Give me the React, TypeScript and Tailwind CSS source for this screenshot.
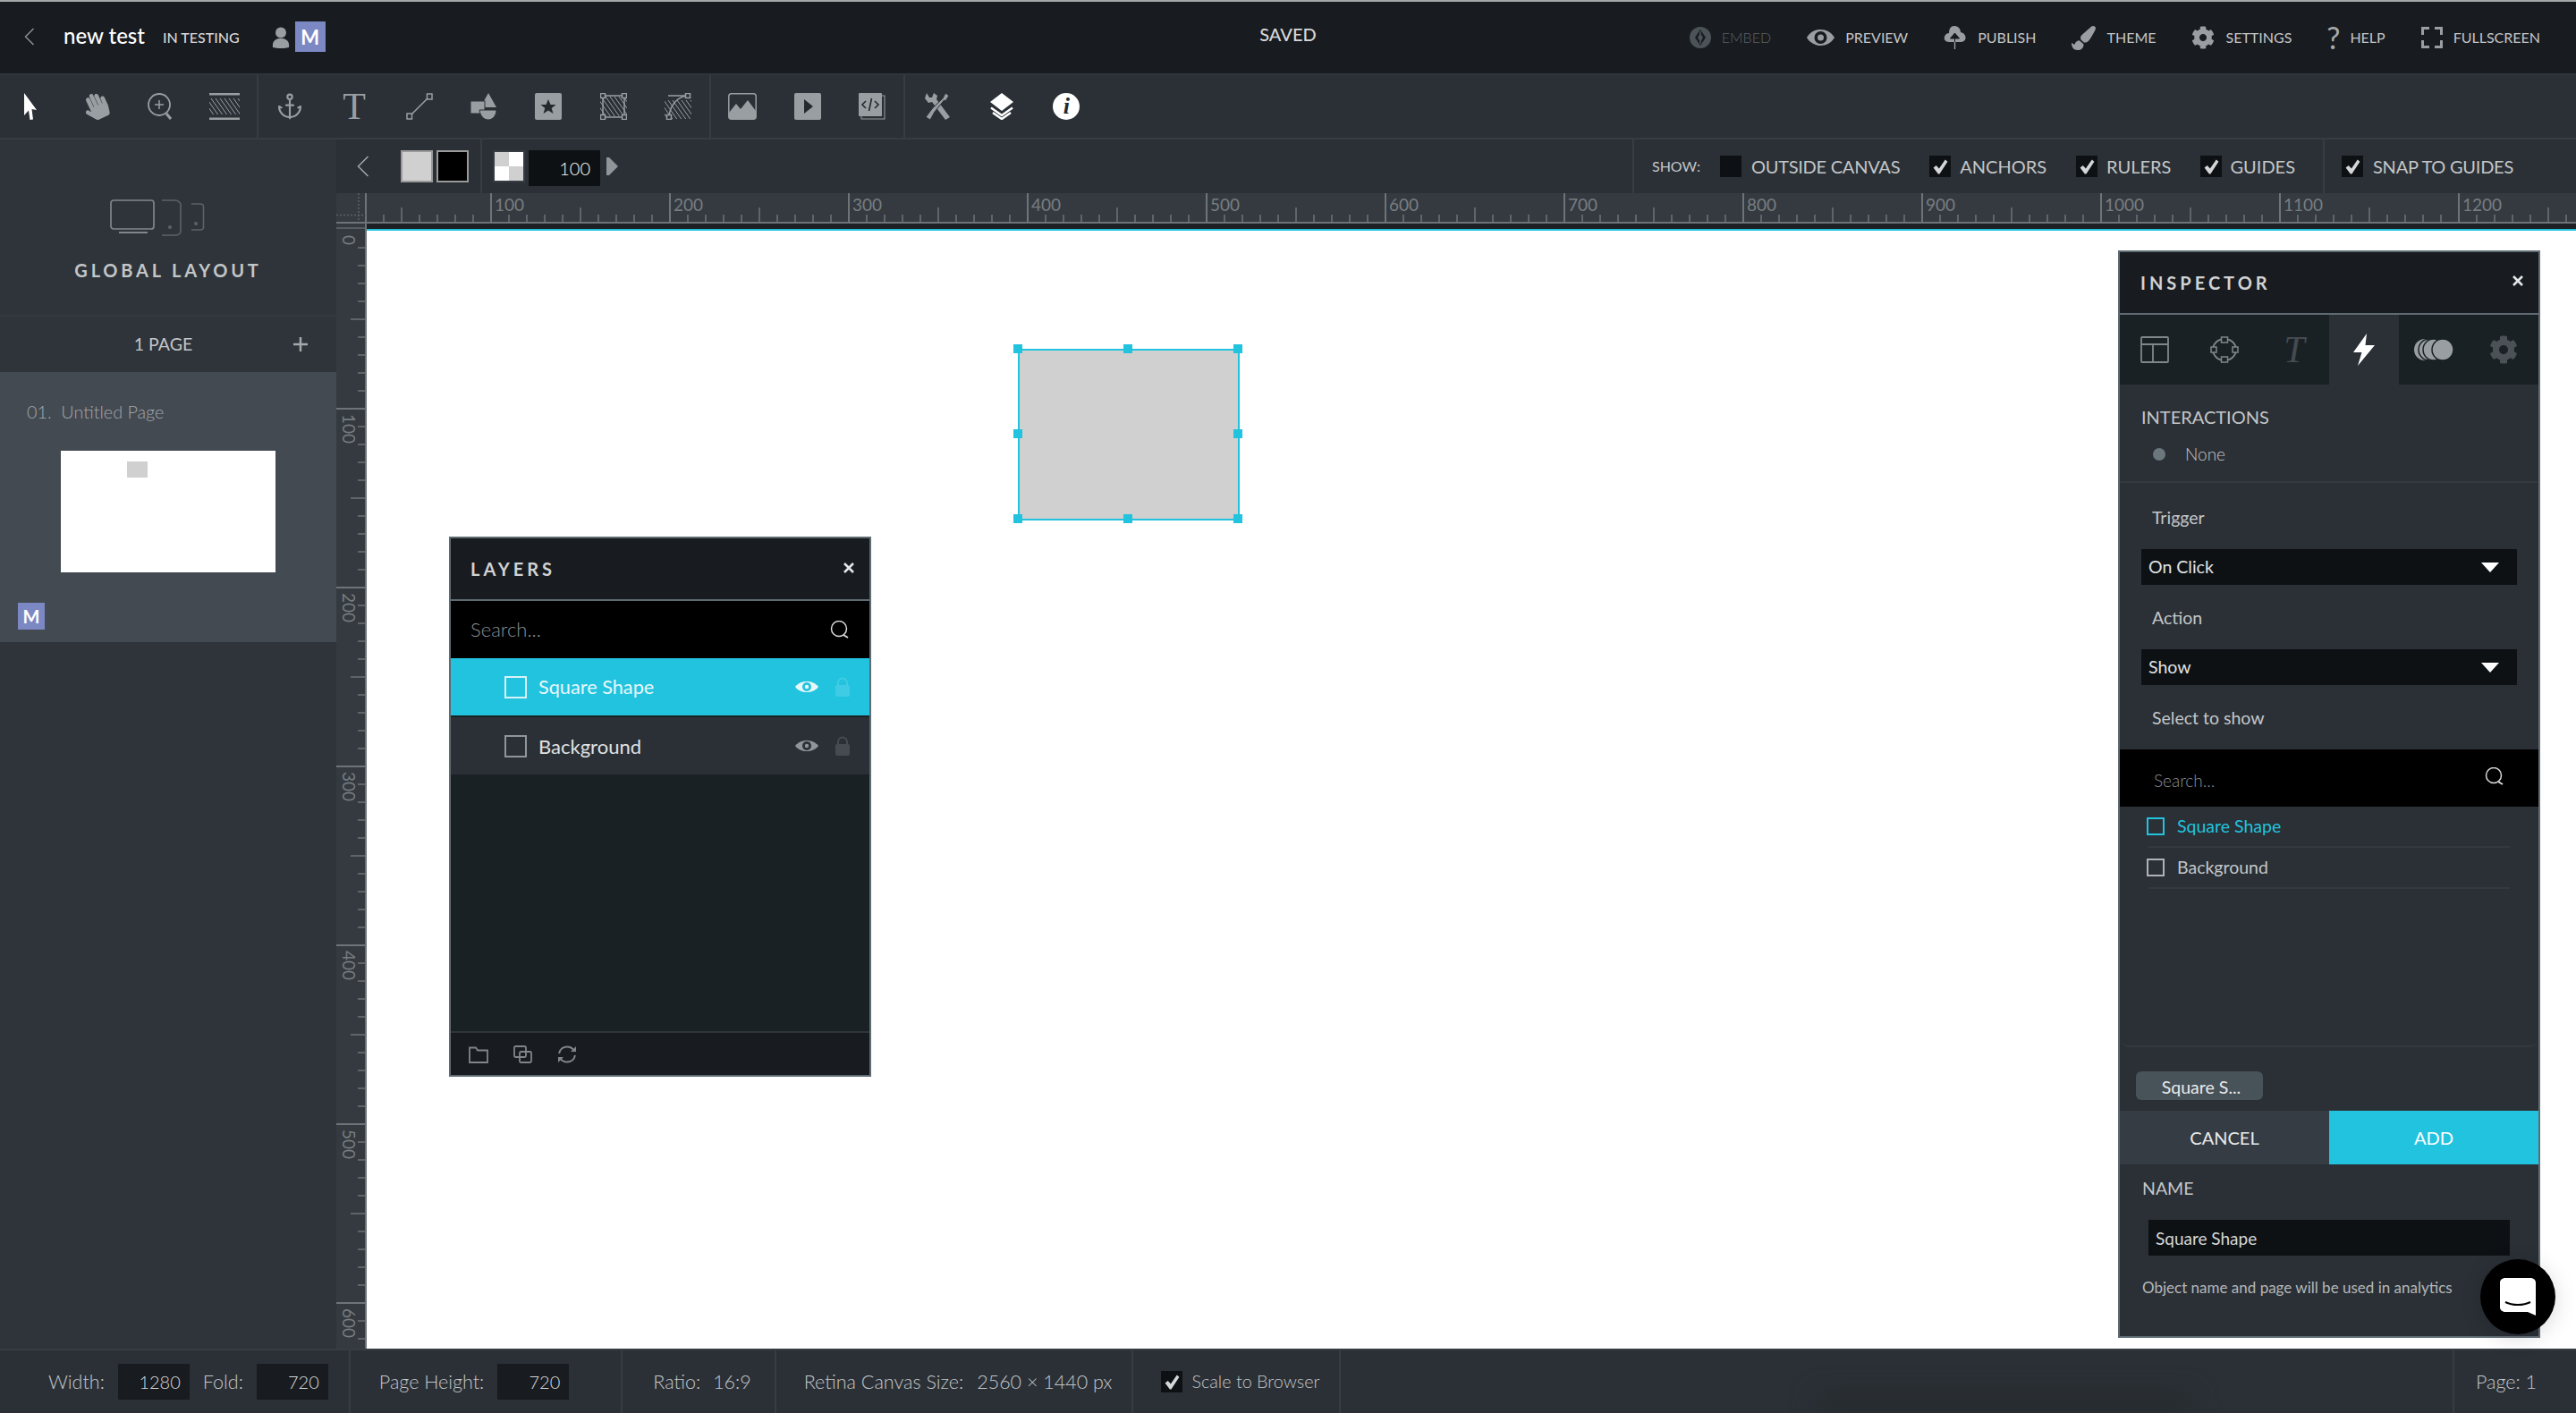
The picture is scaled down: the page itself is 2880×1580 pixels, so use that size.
import React from "react";
import { FaCog, FaHandPaper, FaPaintBrush } from "react-icons/fa";
import { Anchor } from "lucide-react";

const gray = "#999ea2";

const Svg = ({ w, h, children }: { w: number; h: number; children: React.ReactNode }) => (
  <svg width={w} height={h} viewBox={`0 0 ${w} ${h}`} className="shrink-0 block">
    {children}
  </svg>
);

const Hatch = ({ x, y, w, h, color = gray }: { x: number; y: number; w: number; h: number; color?: string }) => {
  const lines = [];
  for (let i = -h; i < w; i += 5) {
    lines.push(<line key={i} x1={x + i} y1={y} x2={x + i + h * 0.7} y2={y + h} stroke={color} strokeWidth="1" />);
  }
  return <g>{lines}</g>;
};

const Handle = ({ x, y }: { x: number; y: number }) => (
  <rect x={x - 2.5} y={y - 2.5} width="5" height="5" fill="#2a3036" stroke={gray} strokeWidth="1.5" />
);

const Close = ({ className }: { className?: string }) => (
  <svg width="14" height="14" viewBox="0 0 14 14" className={className}>
    <path d="M2 2L12 12M12 2L2 12" stroke="#e4e6e7" strokeWidth="2.6" />
  </svg>
);

const SearchGlass = ({ color = "#d8dadb" }: { color?: string }) => (
  <Svg w={22} h={20}>
    <circle cx="10" cy="9" r="8.5" fill="none" stroke={color} strokeWidth="1.5" />
    <path d="M15 16L20 19" stroke={color} strokeWidth="2" />
  </Svg>
);

const Eye = ({ color, pupil }: { color: string; pupil: string }) => (
  <Svg w={26} h={16}>
    <path d="M0 8C6 0 20 0 26 8C20 16 6 16 0 8Z" fill={color} />
    <circle cx="13" cy="8" r="5" fill={pupil} />
    <circle cx="13" cy="8" r="2.2" fill={color} />
  </Svg>
);

const Lock = ({ color }: { color: string }) => (
  <Svg w={16} h={22}>
    <path d="M3 10V6.5a5 5 0 0 1 10 0V10" fill="none" stroke={color} strokeWidth="2" />
    <rect x="0" y="9" width="16" height="13" rx="2" fill={color} />
  </Svg>
);

const Gear = ({ size, color }: { size: number; color: string }) => <FaCog size={size} color={color} className="shrink-0" />;

const Check = () => (
  <div className="shrink-0 bg-[#0d1114] flex items-center justify-center w-[24px] h-[24px]">
    <svg width="19" height="19" viewBox="0 0 18 18">
      <path d="M1.5 10L4.5 7.5L7.5 11L14 1.5L16.5 3.5L8 16.5H6.5Z" fill="#d4d6d7" />
    </svg>
  </div>
);

const Sep = () => <div className="w-[2px] -mx-[1px] self-stretch bg-[#363c42] shrink-0" />;

const ToolCell = ({ children }: { children: React.ReactNode }) => (
  <div className="w-[72.4px] h-full flex items-center justify-center shrink-0">{children}</div>
);

const NavItem = ({ icon, label, dim }: { icon: React.ReactNode; label: string; dim?: boolean }) => (
  <div className="flex items-center gap-[12px]">
    {icon}
    <span className={`text-[16px] ${dim ? "text-[#5a6167] font-light" : "text-[#c4c6c8]"}`}>{label}</span>
  </div>
);

const TopBar = () => (
  <div className="h-[84px] shrink-0 flex items-center bg-[#181b1f] border-t-2 border-b-2 border-t-[#a5a7a9] border-b-[#2f353b]">
    <div className="flex-1 flex items-center">
      <svg width="12" height="20" viewBox="0 0 12 20" className="ml-[27px] -mt-[2px]">
        <path d="M10.5 1L1.5 10L10.5 19" fill="none" stroke="#8f9599" strokeWidth="1.4" />
      </svg>
      <span className="ml-[32px] text-[24px] font-medium text-white leading-none -mt-[4px]">new test</span>
      <span className="ml-[20px] text-[16px] text-[#d6d8d9] leading-none font-medium">IN TESTING</span>
      <div className="ml-[36px]">
        <Svg w={20} h={24}>
          <circle cx="10" cy="6.5" r="6" fill={gray} />
          <path d="M1 23C0 15 5 13 10 13S20 15 19 23C14 24.5 6 24.5 1 23Z" fill={gray} />
        </Svg>
      </div>
      <div className="ml-[6px] w-[34px] h-[34px] -mt-[2px] bg-[#7c88c4] flex items-center justify-center text-white font-bold text-[22px]">
        M
      </div>
    </div>
    <div className="text-[20px] text-[#d6d8d9] font-medium -mt-[8px]">SAVED</div>
    <div className="flex-1 flex justify-end">
      <div className="flex items-center gap-[40px] pr-[40px]">
        <NavItem
          dim
          label="EMBED"
          icon={
            <Svg w={24} h={24}>
              <circle cx="12" cy="12" r="12" fill="#4b5359" />
              <path d="M12 3L18 12L12 21L6 12Z" fill="#181b1f" />
              <path d="M12 7L15 12L12 17L9 12Z" fill="#4b5359" />
              <path d="M12 5V19" stroke="#4b5359" strokeWidth="1.5" />
            </Svg>
          }
        />
        <NavItem label="PREVIEW" icon={<Svg w={31} h={20}><path d="M0 10C7 -2 24 -2 31 10C24 22 7 22 0 10Z" fill={gray} /><circle cx="15.5" cy="10" r="7" fill="#181b1f" /><circle cx="15.5" cy="10" r="3.5" fill={gray} /></Svg>} />
        <NavItem
          label="PUBLISH"
          icon={
            <Svg w={26} h={26}>
              <path d="M12 0C17 0 19 4 19 7C23 8 25 11 24.5 14C24 17 21 18 19 18H7C4 18 1 17 .8 14C.5 11 3 8 6 8C6 3 8 0 12 0Z" fill={gray} />
              <path d="M12.5 26V9M7.5 14L12.5 8L17.5 14Z" stroke="#181b1f" strokeWidth="1" fill="#181b1f" />
              <path d="M12.5 18V26" stroke={gray} strokeWidth="1.4" />
            </Svg>
          }
        />
        <NavItem label="THEME" icon={<FaPaintBrush size={27} color={gray} className="shrink-0" />} />
        <NavItem label="SETTINGS" icon={<Gear size={26} color={gray} />} />
        <NavItem label="HELP" icon={<span className="w-[13px] text-[34px] leading-none text-[#a7abae] flex justify-center">?</span>} />
        <NavItem
          label="FULLSCREEN"
          icon={
            <Svg w={24} h={24}>
              <path d="M1.5 9V1.5H9M15 1.5H22.5V9M22.5 15V22.5H15M9 22.5H1.5V15" fill="none" stroke={gray} strokeWidth="3" />
            </Svg>
          }
        />
      </div>
    </div>
  </div>
);

const Toolbar = () => (
  <div className="h-[72px] shrink-0 flex items-center bg-[#2a3036] border-b-2 border-[#363c42] -ml-[2px]">
    <ToolCell>
      <Svg w={16} h={30}>
        <path d="M1 0L15 19L9.500 18L11 29.500L7.500 30L6 19.500L1 25Z" fill="#fff" />
      </Svg>
    </ToolCell>
    <ToolCell>
      <FaHandPaper size={30} color={gray} className="-rotate-[25deg]" />
    </ToolCell>
    <ToolCell>
      <Svg w={28} h={30}>
        <circle cx="13" cy="13" r="12" fill="none" stroke={gray} strokeWidth="1.8" />
        <path d="M13 8V18M8 13H18" stroke={gray} strokeWidth="1.5" />
        <path d="M21 23L26 29" stroke={gray} strokeWidth="3" />
      </Svg>
    </ToolCell>
    <ToolCell>
      <Svg w={34} h={30}>
        <rect x="0" y="0" width="34" height="2.500" fill={gray} />
        <rect x="0" y="27.500" width="34" height="2.500" fill={gray} />
        <Hatch x={0} y={6} w={34} h={18} />
      </Svg>
    </ToolCell>
    <Sep />
    <ToolCell>
      <Anchor size={32} color={gray} strokeWidth={1.6} />
    </ToolCell>
    <ToolCell>
      <span className="text-[42px] leading-none text-[#999ea2] font-['Liberation_Serif',serif]">T</span>
    </ToolCell>
    <ToolCell>
      <Svg w={30} h={30}>
        <path d="M4 26L26 4" stroke={gray} strokeWidth="1.6" />
        <rect x="1" y="23" width="5.500" height="6" fill="#2a3036" stroke={gray} strokeWidth="1.5" />
        <rect x="23.500" y="1" width="5.500" height="6" fill="#2a3036" stroke={gray} strokeWidth="1.5" />
      </Svg>
    </ToolCell>
    <ToolCell>
      <Svg w={30} h={30}>
        <path d="M20 0L29 16H11Z" fill={gray} />
        <rect x="0" y="9" width="16" height="14" fill={gray} stroke="#2a3036" strokeWidth="1" />
        <path d="M10 19H29C29 26 24 30 20 30C15 30 11 26 10 19Z" fill={gray} stroke="#2a3036" strokeWidth="1" />
      </Svg>
    </ToolCell>
    <ToolCell>
      <Svg w={30} h={30}>
        <rect width="30" height="30" rx="2" fill={gray} />
        <path d="M15 7L17.500 13H23.500L18.700 17L20.500 23L15 19.500L9.500 23L11.300 17L6.500 13H12.500Z" fill="#24292e" />
      </Svg>
    </ToolCell>
    <ToolCell>
      <Svg w={30} h={30}>
        <rect x="3" y="3" width="24" height="24" fill="none" stroke={gray} strokeWidth="1.500" />
        <Hatch x={3} y={4} w={24} h={22} />
        <Handle x={3} y={3} />
        <Handle x={27} y={3} />
        <Handle x={3} y={27} />
        <Handle x={27} y={27} />
      </Svg>
    </ToolCell>
    <ToolCell>
      <Svg w={30} h={30}>
        <path d="M4 3H27" stroke={gray} strokeWidth="1.500" />
        <Hatch x={10} y={8} w={20} h={21} />
        <path d="M5 29C5 15 13 5 25 3" fill="none" stroke={gray} strokeWidth="1.500" />
        <Handle x={26} y={3} />
        <Handle x={5} y={27} />
      </Svg>
    </ToolCell>
    <Sep />
    <ToolCell>
      <Svg w={32} h={30}>
        <rect x=".8" y=".8" width="30.400" height="28.400" rx="3" fill="none" stroke={gray} strokeWidth="1.500" />
        <path d="M1 29V22L9 12L14 18L22 8L31 20V29Z" fill={gray} />
      </Svg>
    </ToolCell>
    <ToolCell>
      <Svg w={30} h={30}>
        <rect width="30" height="30" rx="2" fill={gray} />
        <path d="M11 7L21 15L11 23Z" fill="#24292e" />
      </Svg>
    </ToolCell>
    <ToolCell>
      <Svg w={30} h={30}>
        <rect x="3" y="3" width="26" height="26" fill="#2a3036" stroke={gray} strokeWidth="1" />
        <rect x="0" y="0" width="26" height="26" rx="1" fill={gray} />
        <path d="M8 9L4 13L8 17M18 9L22 13L18 17" fill="none" stroke="#24292e" strokeWidth="1.600" />
        <path d="M14.500 6L11.500 20" stroke="#24292e" strokeWidth="1.600" />
      </Svg>
    </ToolCell>
    <Sep />
    <ToolCell>
      <Svg w={30} h={30}>
        <path d="M3 0L1 6L5 11L9 10L24 30L29 27L14 7L15 3L11 0L9 5L6 5Z" fill={gray} />
        <path d="M24 0L28 3L24 9L22.500 8L12 21L7 30L2 27L9.500 17L21 6Z" fill={gray} stroke="#2a3036" strokeWidth="1" />
      </Svg>
    </ToolCell>
    <ToolCell>
      <Svg w={30} h={30}>
        <path d="M15 0L28 10L15 20L2 10Z" fill="#fff" />
        <path d="M3 16.500L15 25L27 16.500" fill="none" stroke="#fff" strokeWidth="2.500" />
        <path d="M5 22L15 29L25 22" fill="none" stroke="#fff" strokeWidth="2.500" />
      </Svg>
    </ToolCell>
    <ToolCell>
      <div className="w-[30px] h-[30px] rounded-full bg-white flex items-center justify-center text-[#24292e] italic font-bold text-[26px] leading-none font-['Liberation_Serif',serif]">
        i
      </div>
    </ToolCell>
  </div>
);

const Sidebar = () => (
  <div className="w-[376px] shrink-0 flex flex-col bg-[#2e343a]">
    <div className="h-[198px] shrink-0 flex flex-col items-center border-b-2 border-[#33393f]">
      <div className="mt-[67px] ml-[-24px]">
        <Svg w={106} h={42}>
          <rect x="1" y="1" width="48" height="32" rx="3" fill="none" stroke="#81868a" strokeWidth="1.700" />
          <path d="M10 37H42" stroke="#81868a" strokeWidth="2" />
          <path d="M58 1H73C75 1 79 3 79 6V36C79 39 75 40 73 40H58" fill="none" stroke="#5c6267" strokeWidth="1.600" />
          <circle cx="67" cy="31" r="2" fill="#5c6267" />
          <path d="M91 5H101C103 5 104.500 6 104.500 8V31C104.500 33 103 34 101 34H91" fill="none" stroke="#5c6267" strokeWidth="1.600" />
          <circle cx="96" cy="27" r="2" fill="#5c6267" />
        </Svg>
      </div>
      <div className="mt-[27px] text-[20px] font-bold tracking-[0.19em] text-[#c3c6c8] leading-none">GLOBAL LAYOUT</div>
    </div>
    <div className="h-[62px] shrink-0 relative flex items-center justify-center">
      <span className="text-[19.5px] text-[#c3c6c8] -ml-[11px]">1 PAGE</span>
      <svg width="16" height="16" viewBox="0 0 16 16" className="absolute left-[328px] top-[23px]">
        <path d="M8 0V16M0 8H16" stroke="#a4a8ab" strokeWidth="2.500" />
      </svg>
    </div>
    <div className="h-[302px] shrink-0 bg-[#434a52] flex flex-col">
      <div className="mt-[32px] pl-[30px] text-[19.8px] font-light text-[#a2a6aa] leading-[24px] whitespace-pre">01.&nbsp; Untitled Page</div>
      <div className="mt-[32px] ml-[68px] w-[240px] h-[136px] bg-white pt-[12px] pl-[74px]">
        <div className="w-[23px] h-[18px] bg-[#d0d0d0]" />
      </div>
      <div className="mt-[34px] ml-[20px] w-[30px] h-[30px] bg-[#7c88c4] flex items-center justify-center text-white font-bold text-[20px]">
        M
      </div>
    </div>
  </div>
);

const OptionRow = () => (
  <div className="h-[60px] shrink-0 flex items-center bg-[#2a3036]">
    <svg width="14" height="24" viewBox="0 0 14 24" className="ml-[23px] shrink-0">
      <path d="M12.500 1L1.500 12L12.500 23" fill="none" stroke="#a4a8ab" strokeWidth="1.500" />
    </svg>
    <div className="ml-[35px] w-[36px] h-[36px] border-2 border-[#9a9a9a] bg-[#d0d0d0] shrink-0" />
    <div className="ml-[4px] w-[36px] h-[36px] border-2 border-[#9a9a9a] bg-black shrink-0" />
    <div className="ml-[13px] w-[2px] self-stretch bg-[#363c42] shrink-0" />
    <div className="ml-[12px] w-[36px] h-[36px] border-2 border-[#363c42] grid grid-cols-2 shrink-0">
      <div className="bg-[#d0d0d0]" />
      <div className="bg-white" />
      <div className="bg-white" />
      <div className="bg-[#d0d0d0]" />
    </div>
    <div className="ml-[4px] mt-[4px] w-[80px] h-[40px] bg-[#0d1114] flex items-center justify-end pr-[11px] text-[20px] font-light text-white shrink-0">
      100
    </div>
    <svg width="13" height="20" viewBox="0 0 13 20" className="ml-[7px] shrink-0">
      <path d="M0 0H3L13 10L3 20H0Z" fill="#8f9599" />
    </svg>
    <div className="flex-1" />
    <div className="w-[2px] self-stretch bg-[#363c42] shrink-0" />
    <span className="ml-[20px] text-[16px] text-[#c4c6c8]">SHOW:</span>
    <div className="ml-[22px] w-[24px] h-[24px] bg-[#0d1114] shrink-0" />
    <span className="ml-[11px] text-[20px] tracking-[-0.25px] text-[#c4c6c8]">OUTSIDE CANVAS</span>
    <div className="ml-[33px]"><Check /></div>
    <span className="ml-[10px] text-[20px] text-[#c4c6c8]">ANCHORS</span>
    <div className="ml-[33px]"><Check /></div>
    <span className="ml-[10px] text-[20px] text-[#c4c6c8]">RULERS</span>
    <div className="ml-[33px]"><Check /></div>
    <span className="ml-[9px] text-[20px] text-[#c4c6c8]">GUIDES</span>
    <div className="ml-[31px] w-[2px] self-stretch bg-[#363c42] shrink-0" />
    <div className="ml-[19px]"><Check /></div>
    <span className="ml-[11px] text-[20px] tracking-[-0.25px] text-[#c4c6c8]">SNAP TO GUIDES</span>
    <div className="w-[70px] shrink-0" />
  </div>
);

const tick = "#6e7377";
const rulerText = "#787d81";

const HRuler = () => {
  const items = [];
  for (let x = 429; x < 2880; x += 20) {
    const n = (x - 349) / 20;
    const rx = x - 376;
    if (n % 10 === 0) {
      items.push(<line key={x} x1={rx} y1="0" x2={rx} y2="32" stroke={tick} strokeWidth="2" />);
      items.push(
        <text key={`t${x}`} x={rx + 4} y="20" fill={rulerText} fontSize="19" fontFamily="Lato, sans-serif">
          {(n / 10) * 100}
        </text>
      );
    } else {
      items.push(<line key={x} x1={rx} y1={n % 5 === 0 ? 16 : 24} x2={rx} y2="32" stroke={tick} strokeWidth="1.500" />);
    }
  }
  return (
    <svg width="2504" height="40" viewBox="0 0 2504 40" className="block shrink-0">
      <rect width="2504" height="40" fill="#343a40" />
      <rect x="34" y="34" width="2470" height="6" fill="#1d2125" />
      <rect y="32" width="2504" height="2" fill={tick} />
      <rect x="32" width="2" height="40" fill={tick} />
      <rect y="38" width="32" height="2" fill="#565c61" />
      <path d="M25 0V32M0 24.500H33" stroke="#5c6267" strokeWidth="1.500" strokeDasharray="2 2" fill="none" />
      {items}
    </svg>
  );
};

const VRuler = () => {
  const items = [];
  for (let y = 277; y < 1508; y += 20) {
    const n = (y - 257) / 20;
    const ry = y - 256;
    if (n % 10 === 0) {
      items.push(<line key={y} x1="0" y1={ry} x2="32" y2={ry} stroke={tick} strokeWidth="2" />);
    } else {
      items.push(<line key={y} x1={n % 5 === 0 ? 16 : 24} y1={ry} x2="32" y2={ry} stroke={tick} strokeWidth="1.500" />);
    }
  }
  for (let i = 0; i <= 6; i++) {
    const ry = 1 + i * 200 + 6;
    items.push(
      <text key={`l${i}`} transform={`translate(7 ${ry}) rotate(90)`} fill={rulerText} fontSize="19" fontFamily="Lato, sans-serif">
        {i * 100}
      </text>
    );
  }
  return (
    <svg width="34" height="1252" viewBox="0 0 34 1252" className="block shrink-0">
      <rect width="34" height="1252" fill="#343a40" />
      <rect x="32" width="2" height="1252" fill={tick} />
      {items}
    </svg>
  );
};

const Bolt = ({ color }: { color: string }) => (
  <Svg w={24} h={36}>
    <path d="M15 0L0 21H9.500L5 36L24 13H13.500Z" fill={color} />
  </Svg>
);

const Box = ({ size, color }: { size: number; color: string }) => (
  <div className="shrink-0 border-2" style={{ width: size, height: size, borderColor: color }} />
);

const LayersPanel = () => (
  <div className="absolute left-[92px] top-[342px] w-[472px] h-[604px] border-2 border-[#5f6b73] bg-[#1a2125] flex flex-col">
    <div className="h-[70px] shrink-0 bg-[#181b1f] border-b-2 border-[#5f6b73] flex items-center justify-between pl-[22px] pr-[16px]">
      <span className="text-[20px] font-bold tracking-[0.2em] text-[#d0d2d4]">LAYERS</span>
      <Close className="-mt-[3px]" />
    </div>
    <div className="h-[64px] shrink-0 bg-black flex items-center justify-between pl-[22px] pr-[22px]">
      <span className="text-[22px] font-light text-[#8c8f92] -mt-[2px]">Search...</span>
      <SearchGlass />
    </div>
    <div className="h-[64px] shrink-0 bg-[#22c3df] flex items-center pl-[60px] pr-[22px]">
      <Box size={25} color="#d9f2f7" />
      <span className="ml-[13px] text-[21.7px] text-[#e8f7fa] flex-1">Square Shape</span>
      <Eye color="#e8f7fa" pupil="#22c3df" />
      <div className="ml-[19px]"><Lock color="#3fcbe3" /></div>
    </div>
    <div className="h-[64px] mt-[2px] shrink-0 bg-[#2a3036] flex items-center pl-[60px] pr-[22px]">
      <Box size={25} color="#8f9599" />
      <span className="ml-[13px] text-[22px] text-[#e0e2e3] flex-1">Background</span>
      <Eye color="#8f9599" pupil="#2a3036" />
      <div className="ml-[19px]"><Lock color="#454b51" /></div>
    </div>
    <div className="flex-1" />
    <div className="h-[49px] shrink-0 bg-[#181b1f] border-t-2 border-[#2f353b] flex items-center pl-[20px] gap-[28px]">
      <Svg w={22} h={20}>
        <path d="M1 2.500H8L10 5.500H21V19H1Z" fill="none" stroke="#81868a" strokeWidth="1.800" />
      </Svg>
      <Svg w={21} h={20}>
        <rect x="1" y="1" width="13" height="12" rx="1.500" fill="none" stroke="#81868a" strokeWidth="1.800" />
        <rect x="7" y="7" width="13" height="12" rx="1.500" fill="none" stroke="#81868a" strokeWidth="1.800" />
      </Svg>
      <Svg w={22} h={20}>
        <path d="M2 9C3 4 7 1.500 11 1.500C14 1.500 17 3 18.500 5.500M20 11C19 16 15 18.500 11 18.500C8 18.500 5 17 3.500 14.500" fill="none" stroke="#81868a" strokeWidth="2" />
        <path d="M21 1V7H15ZM1 19V13H7Z" fill="#81868a" />
      </Svg>
    </div>
  </div>
);

const Select = ({ label }: { label: string }) => (
  <div className="mx-[24px] h-[40px] shrink-0 bg-[#0d1114] flex items-center justify-between pl-[8px] pr-[20px] text-[19.5px] text-[#e0e2e3]">
    <span>{label}</span>
    <svg width="20" height="11" viewBox="0 0 20 11">
      <path d="M0 0H20L10 11Z" fill="#fff" />
    </svg>
  </div>
);

const Label = ({ children, className }: { children: React.ReactNode; className?: string }) => (
  <div className={`h-[24px] leading-[24px] text-[19.5px] text-[#c4c6c8] shrink-0 ${className ?? ""}`}>{children}</div>
);

const Inspector = () => (
  <div className="absolute left-[1958px] top-[22px] w-[472px] h-[1216px] border-2 border-[#5f6b73] bg-[#2a3036] flex flex-col">
    <div className="h-[70px] shrink-0 bg-[#181b1f] border-b-2 border-[#5f6b73] flex items-center justify-between pl-[23px] pr-[16px]">
      <span className="text-[20px] font-bold tracking-[0.2em] text-[#d0d2d4]">INSPECTOR</span>
      <Close className="-mt-[4px]" />
    </div>
    <div className="h-[78px] shrink-0 bg-[#1a2125] grid grid-cols-6">
      <div className="flex items-center justify-center">
        <Svg w={32} h={30}>
          <rect x="1" y="1" width="30" height="28" rx="1" fill="none" stroke="#81868a" strokeWidth="1.800" />
          <path d="M1 9H31M14 9V29" stroke="#81868a" strokeWidth="1.800" />
        </Svg>
      </div>
      <div className="flex items-center justify-center">
        <Svg w={32} h={30}>
          <ellipse cx="16" cy="15" rx="13" ry="12" fill="none" stroke="#81868a" strokeWidth="1.800" />
          <rect x="12.500" y="1" width="7" height="6" fill="#1a2125" stroke="#81868a" strokeWidth="1.500" />
          <rect x="12.500" y="23" width="7" height="6" fill="#1a2125" stroke="#81868a" strokeWidth="1.500" />
          <rect x="1" y="12" width="6" height="6" fill="#1a2125" stroke="#81868a" strokeWidth="1.500" />
          <rect x="25" y="12" width="6" height="6" fill="#1a2125" stroke="#81868a" strokeWidth="1.500" />
        </Svg>
      </div>
      <div className="flex items-center justify-center text-[42px] leading-none italic text-[#454b51] font-['Liberation_Serif',serif]">T</div>
      <div className="bg-[#2a3036] flex items-center justify-center">
        <Bolt color="#fff" />
      </div>
      <div className="flex items-center justify-center">
        <Svg w={44} h={26}>
          <circle cx="12" cy="13" r="12" fill={gray} />
          <circle cx="17" cy="13" r="12" fill={gray} stroke="#1a2125" strokeWidth="1.500" />
          <circle cx="22" cy="13" r="12" fill={gray} stroke="#1a2125" strokeWidth="1.500" />
          <circle cx="32" cy="13" r="12" fill={gray} stroke="#1a2125" strokeWidth="1.500" />
        </Svg>
      </div>
      <div className="flex items-center justify-center">
        <Gear size={32} color="#4b5157" />
      </div>
    </div>
    <div className="h-[110px] shrink-0 border-b-2 border-[#33393f] pl-[24px]">
      <div className="mt-[24px] h-[24px] leading-[24px] text-[20px] text-[#c4c6c8]">INTERACTIONS</div>
      <div className="mt-[18px] flex items-center">
        <div className="ml-[13px] w-[14px] h-[14px] rounded-full bg-[#6b767e]" />
        <span className="ml-[22px] text-[19px] font-light leading-[24px] text-[#c4c6c8]">None</span>
      </div>
    </div>
    <Label className="mt-[27px] pl-[36px]">Trigger</Label>
    <div className="mt-[23px]"><Select label="On Click" /></div>
    <Label className="mt-[25px] pl-[36px]">Action</Label>
    <div className="mt-[23px]"><Select label="Show" /></div>
    <Label className="mt-[25px] pl-[36px]">Select to show</Label>
    <div className="mt-[23px] h-[64px] shrink-0 bg-black flex items-start justify-between pl-[38px] pr-[38px] pt-[23px]">
      <span className="text-[19px] font-light leading-[24px] text-[#8c8f92]">Search...</span>
      <div className="-mt-[3px]"><SearchGlass /></div>
    </div>
    <div className="mx-[32px] h-[46px] shrink-0 border-b-2 border-[#33393f] flex items-center">
      <div className="-ml-[2px]"><Box size={20} color="#22c3df" /></div>
      <span className="ml-[14px] text-[19.5px] text-[#22c3df]">Square Shape</span>
    </div>
    <div className="mx-[32px] h-[46px] shrink-0 border-b-2 border-[#33393f] flex items-center">
      <div className="-ml-[2px]"><Box size={20} color="#b0b3b5" /></div>
      <span className="ml-[14px] text-[19.5px] text-[#c4c6c8]">Background</span>
    </div>
    <div className="flex-1 border-b-2 border-[#33393f] rounded-b-[10px]" />
    <div className="mt-[27px] ml-[18px] pl-[4px] pt-[3px] w-[142px] h-[32px] rounded-[6px] bg-[#485259] flex items-center justify-center text-[19.5px] text-[#e8eaeb] shrink-0">
      Square S...
    </div>
    <div className="mt-[12px] h-[60px] shrink-0 grid grid-cols-2">
      <div className="bg-[#363c44] flex items-center justify-center text-[20px] text-[#e8eaeb]">CANCEL</div>
      <div className="bg-[#22c3df] flex items-center justify-center text-[20px] text-white">ADD</div>
    </div>
    <div className="mt-[15px] pl-[25px]"><Label>NAME</Label></div>
    <div className="mt-[23px] mx-[32px] h-[40px] pt-[2px] shrink-0 bg-[#0d1114] flex items-center pl-[8px] text-[19px] text-[#d6d8d9]">Square Shape</div>
    <div className="mt-[24px] mb-[42px] pl-[25px] text-[17px] leading-[24px] text-[#b4b7b9] shrink-0">Object name and page will be used in analytics</div>
  </div>
);

const Shape = () => {
  const dots = [
    "left-[-7px] top-[-7px]",
    "left-[116px] top-[-7px]",
    "left-[239px] top-[-7px]",
    "left-[-7px] top-[88px]",
    "left-[239px] top-[88px]",
    "left-[-7px] top-[183px]",
    "left-[116px] top-[183px]",
    "left-[239px] top-[183px]",
  ];
  return (
    <div className="absolute left-[728px] top-[132px] w-[248px] h-[192px] bg-[#d0d0d0] border-2 border-[#22c3df]">
      {dots.map((d) => (
        <div key={d} className={`absolute w-[10px] h-[10px] bg-[#22c3df] ${d}`} />
      ))}
    </div>
  );
};

const Field = ({ value }: { value: string }) => (
  <div className="w-[80px] h-[40px] bg-[#181b1f] flex items-center justify-end pr-[10px] text-[20px] font-light text-[#d6d8d9] shrink-0">
    {value}
  </div>
);

const BottomBar = () => (
  <div className="h-[72px] shrink-0 bg-[#2a3036] border-t-2 border-[#363c42] flex items-center text-[21.5px] font-light text-[#c4c6c8] whitespace-nowrap relative">
    <span className="ml-[54px]">Width:</span>
    <div className="ml-[15px]"><Field value="1280" /></div>
    <span className="ml-[15px]">Fold:</span>
    <div className="ml-[15px]"><Field value="720" /></div>
    <div className="ml-[23px] w-[2px] self-stretch bg-[#363c42]" />
    <span className="ml-[32px]">Page Height:</span>
    <div className="ml-[15px]"><Field value="720" /></div>
    <div className="ml-[58px] w-[2px] self-stretch bg-[#363c42]" />
    <span className="ml-[34px]">Ratio:</span>
    <span className="ml-[14px]">16:9</span>
    <div className="ml-[26px] w-[2px] self-stretch bg-[#363c42]" />
    <span className="ml-[31px]">Retina Canvas Size:</span>
    <span className="ml-[15px]">2560 × 1440 px</span>
    <div className="ml-[22px] w-[2px] self-stretch bg-[#363c42]" />
    <div className="ml-[31px]"><Check /></div>
    <span className="ml-[10px] text-[19.8px]">Scale to Browser</span>
    <div className="ml-[22px] w-[2px] self-stretch bg-[#363c42]" />
    <div className="flex-1 h-full flex items-end justify-center pl-[240px]">
      <div className="w-[420px] h-[20px] bg-[#25292b] blur-[14px]" />
    </div>
    <div className="w-[2px] self-stretch bg-[#363c42]" />
    <span className="ml-[24px] mr-[44px]">Page: 1</span>
  </div>
);

const ChatBubble = () => (
  <div className="absolute left-[2773px] top-[1408px] w-[84px] h-[84px] rounded-full bg-black shadow-[0_4px_24px_rgba(0,0,0,0.15)] flex items-center justify-center">
    <svg width="40" height="42" viewBox="0 0 40 42">
      <path d="M6 0H34C37.500 0 40 2.500 40 5V42L31 38H6C2.500 38 0 35.500 0 33V5C0 2.500 2.500 0 6 0Z" fill="#fff" />
      <path d="M6 27C14 31 26 31 34 27" fill="none" stroke="#000" strokeWidth="2" />
    </svg>
  </div>
);

export default function App() {
  return (
    <div className="relative w-[2880px] h-[1580px] overflow-hidden flex flex-col bg-[#2a3036] font-['Lato',sans-serif]">
      <TopBar />
      <Toolbar />
      <div className="flex-1 min-h-0 flex">
        <Sidebar />
        <div className="flex-1 min-w-0 flex flex-col">
          <OptionRow />
          <HRuler />
          <div className="flex-1 min-h-0 flex">
            <VRuler />
            <div className="relative flex-1 bg-white border-t-2 border-[#22c3df] overflow-hidden">
              <Shape />
              <LayersPanel />
              <Inspector />
            </div>
          </div>
        </div>
      </div>
      <BottomBar />
      <ChatBubble />
    </div>
  );
}
